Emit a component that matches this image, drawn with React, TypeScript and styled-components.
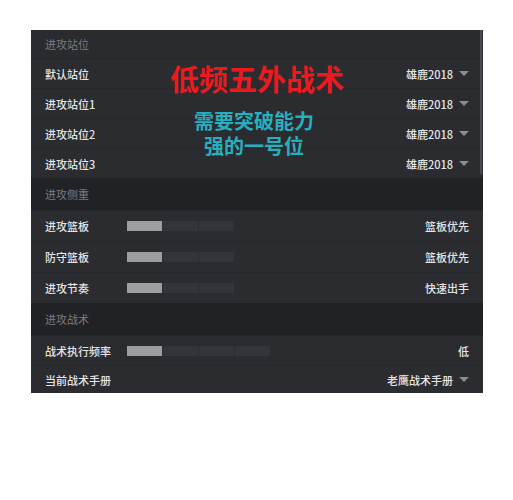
import React from "react";
import styled, {createGlobalStyle} from "styled-components";

const GlobalStyle = createGlobalStyle`
    html, body{
        margin: 0;
        background: #ffffff;
        font-family: "Noto Sans CJK SC", "Noto Sans", "Liberation Sans", sans-serif;
    }
`

const Page = styled.div`
    padding: 30px 0 0 31px;
`

const Panel = styled.div`
    position: relative;
    width: 452px;
    background: #2b2c30;
    overflow: hidden;
`

const ScrollThumb = styled.div`
    position: absolute;
    top: 0;
    right: 1px;
    width: 2px;
    height: 144px;
    background: #4a4b50;
`

const Header = styled.div<{$h: number; $top?: boolean}>`
    height: ${p => p.$h}px;
    display: flex;
    align-items: center;
    padding: 0 14px;
    background: ${p => p.$top ? "#2a2b2f" : "#212225"};
    color: #7c7d82;
    font-size: 11px;
`

const Row = styled.div<{$h: number}>`
    height: ${p => p.$h}px;
    display: grid;
    grid-template-columns: 82px 1fr auto;
    align-items: center;
    padding: 0 14px;
    border-top: 1px solid #27282b;
    box-sizing: border-box;
    color: #e4e4e6;
    font-size: 11px;
    font-weight: 500;
`

const Label = styled.span`
    white-space: nowrap;
`

const Meter = styled.div`
    display: flex;
    gap: 1px;
`

const Segment = styled.span<{$on: boolean}>`
    width: 35px;
    height: 10px;
    background: ${p => p.$on ? "#9d9ea1" : "#34353a"};
`

const Value = styled.div`
    display: flex;
    align-items: center;
    gap: 6px;
    white-space: nowrap;
`

const Caret = styled.span`
    width: 0;
    height: 0;
    border-left: 5px solid transparent;
    border-right: 5px solid transparent;
    border-top: 5px solid #8b8c90;
`

const Callout = styled.div`
    position: absolute;
    top: 33px;
    left: 0;
    right: 0;
    display: flex;
    flex-direction: column;
    align-items: center;
    pointer-events: none;
    font-weight: 700;
    h1{
        margin: 0;
        font-size: 29px;
        line-height: 30px;
        color: #ea1a1f;
    }
    p{
        margin: 15px 0 0 -6px;
        font-size: 20px;
        line-height: 25px;
        color: #27aebf;
        text-align: center;
    }
`

type Item = {label: string; value: string; caret?: boolean; meter?: number; h: number}

const sections: {title: string; h: number; items: Item[]}[] = [
    {title: "进攻站位", h: 28, items: [
        {label: "默认站位", value: "雄鹿2018", caret: true, h: 30},
        {label: "进攻站位1", value: "雄鹿2018", caret: true, h: 30},
        {label: "进攻站位2", value: "雄鹿2018", caret: true, h: 30},
        {label: "进攻站位3", value: "雄鹿2018", caret: true, h: 30},
    ]},
    {title: "进攻侧重", h: 32, items: [
        {label: "进攻篮板", value: "篮板优先", meter: 3, h: 31},
        {label: "防守篮板", value: "篮板优先", meter: 3, h: 31},
        {label: "进攻节奏", value: "快速出手", meter: 3, h: 31},
    ]},
    {title: "进攻战术", h: 32, items: [
        {label: "战术执行频率", value: "低", meter: 4, h: 30},
        {label: "当前战术手册", value: "老鹰战术手册", caret: true, h: 28},
    ]},
]

const App = ()=>{
    return(
        <Page>
            <GlobalStyle/>
            <Panel>
                {sections.map((s, i) => (
                    <div key={s.title}>
                        <Header $h={s.h} $top={i === 0}>{s.title}</Header>
                        {s.items.map(it => (
                            <Row key={it.label} $h={it.h}>
                                <Label>{it.label}</Label>
                                <div>
                                    {it.meter && (
                                        <Meter>
                                            {Array.from({length: it.meter}, (_, k) => <Segment key={k} $on={k === 0}/>)}
                                        </Meter>
                                    )}
                                </div>
                                <Value>
                                    {it.value}
                                    {it.caret && <Caret/>}
                                </Value>
                            </Row>
                        ))}
                    </div>
                ))}
                <ScrollThumb/>
                <Callout>
                    <h1>低频五外战术</h1>
                    <p>需要突破能力<br/>强的一号位</p>
                </Callout>
            </Panel>
        </Page>
    )
}

export default App
